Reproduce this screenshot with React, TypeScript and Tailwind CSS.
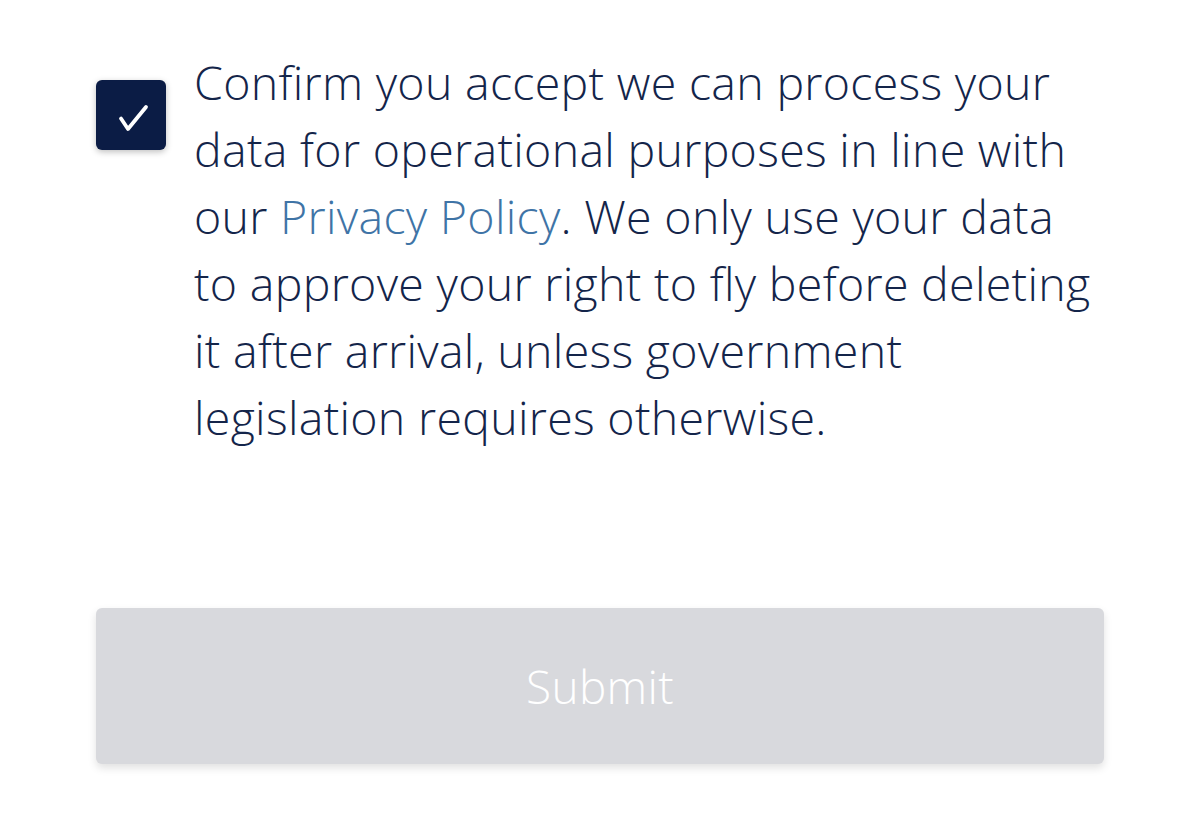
import React from "react";

export default function App() {
  return (
    <div className="w-[1200px] h-[833px] bg-white" style={{ fontFamily: '"Open Sans", sans-serif' }}>
      <div className="pl-[96px] pr-[96px] pt-[49px]">
        <div className="flex items-start gap-[28px]">
          <div className="relative mt-[31px] w-[70px] h-[70px] shrink-0 rounded-[6px] bg-[#0b1c45] shadow-[0_2px_6px_rgba(0,0,0,0.25)]">
            <svg className="absolute inset-0" width="70" height="70" viewBox="0 0 70 70" fill="none">
              <path d="M25 38.5 L32 49 L50 27" stroke="white" strokeWidth="3.8" strokeLinecap="round" strokeLinejoin="round" />
            </svg>
          </div>
          <p className="w-[902px] text-[46.5px] leading-[67px] font-light tracking-[0.3px] text-[#14254a]">
            Confirm you accept we can process your data for operational purposes in line with our{" "}
            <span className="text-[#3f74a6]">Privacy Policy</span>. We only use your data to approve your right to fly before deleting it after arrival, unless government legislation requires otherwise.
          </p>
        </div>
        <button className="mt-[157px] w-[1008px] h-[156px] rounded-[6px] bg-[#d8d9dd] shadow-[0_4px_8px_rgba(0,0,0,0.12)] text-white text-[46px] font-light tracking-[0.3px] flex items-center justify-center">
          Submit
        </button>
      </div>
    </div>
  );
}
